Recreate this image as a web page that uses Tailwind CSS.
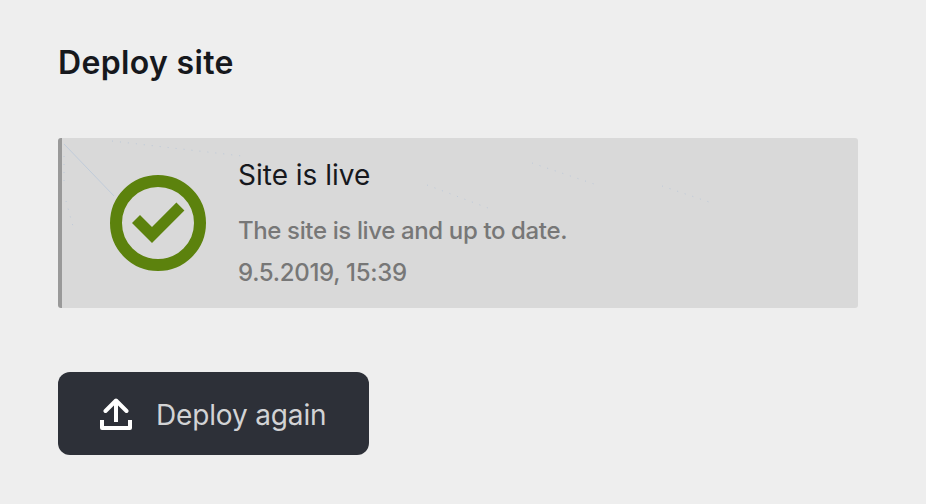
<!DOCTYPE html>
<html lang="en">
<head>
<meta charset="utf-8">
<title>Deploy site</title>
<script src="https://cdn.jsdelivr.net/npm/@tailwindcss/browser@4"></script>
</head>
<body class="h-[504px] overflow-hidden bg-[#eeeeee] pt-[43px] pl-[58px] font-['Inter',sans-serif]">
<main class="flex w-[800px] flex-col items-start">
  <h1 class="h-10 text-[32px] leading-10 font-semibold tracking-[0.35px] whitespace-nowrap text-[#16181d]">Deploy site</h1>
  <section class="relative mt-[55px] flex h-[170px] w-full overflow-hidden rounded-[3px] border-l-4 border-[#999999] bg-[#d9d9d9] pl-12">
    <svg class="absolute inset-0 h-full w-full" viewBox="0 0 796 170" fill="none" stroke="#b5c4d8" aria-hidden="true">
      <path d="M2 6L52 58" stroke-width=".7"/>
      <path d="M2 18V46M4 63L12 92M50 3L180 18M365 47L426 70M470 25L535 47M600 48L650 65" stroke-width=".8" stroke-dasharray="1 7"/>
    </svg>
    <svg class="relative mt-[37px] size-24 shrink-0" viewBox="0 0 96 96" aria-hidden="true">
      <circle cx="48" cy="48" r="42" fill="none" stroke="#5c820d" stroke-width="12"/>
      <path d="M30 40L42 52L66.4 27.6L74.4 35.6L42 68L22 48Z" fill="#5c820d"/>
    </svg>
    <div class="relative ml-8 pt-[19px] whitespace-nowrap">
      <h2 class="h-9 text-[28px] leading-9 text-[#16181d]">Site is live</h2>
      <p class="mt-[17px] h-[42px] text-[24px] leading-[42px] font-medium tracking-[-0.37px] text-[#777777]">The site is live and up to date.</p>
      <p class="h-[42px] text-[24px] leading-[42px] font-medium tracking-[-0.3px] text-[#777777]">9.5.2019, 15:39</p>
    </div>
  </section>
  <button class="mt-16 flex h-[83px] w-[311px] items-center rounded-xl bg-[#2d3038] pl-[42px] text-[28px] leading-9 tracking-[-0.15px] whitespace-nowrap text-[#d2d3d5]">
    <svg class="size-8 shrink-0" viewBox="0 0 32 32" fill="none" stroke="#ffffff" stroke-width="4" aria-hidden="true">
      <path d="M2 22V30H30V22" stroke-linejoin="round"/>
      <path d="M16 24V3"/>
      <path d="M5.5 13L16 2.5L26.5 13" stroke-linecap="round" stroke-linejoin="round"/>
    </svg>
    <span class="ml-6 pt-0.5">Deploy again</span>
  </button>
</main>
</body>
</html>
